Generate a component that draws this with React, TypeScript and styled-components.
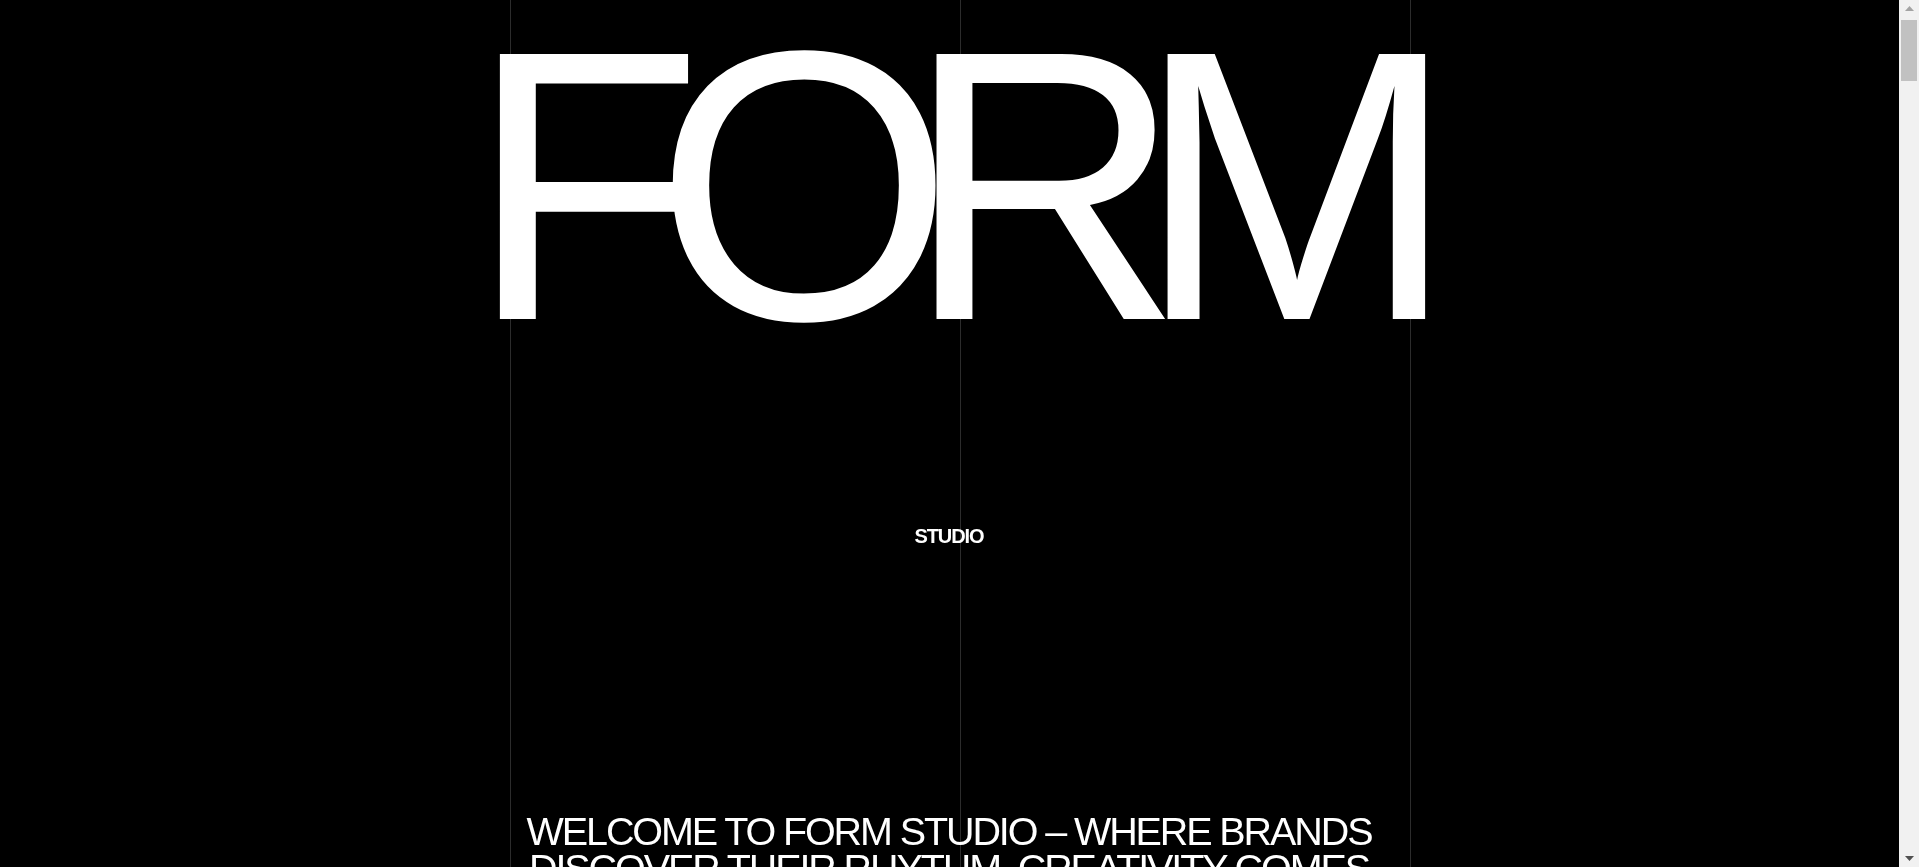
import React from "react";
import styled, { createGlobalStyle } from "styled-components";

const GlobalStyle = createGlobalStyle`
  html, body {
    margin: 0;
    padding: 0;
    background: #000;
    color: #fff;
    font-family: "Liberation Sans", Arial, Helvetica, sans-serif;
  }
  * { box-sizing: border-box; }
`;

const Page = styled.div`
  position: relative;
  min-height: 100vh;
  background: #000;
  padding-right: 21px;
`;

const GridOverlay = styled.div`
  position: fixed;
  top: 0;
  bottom: 0;
  left: calc(50vw - 449.5px);
  width: 901px;
  display: flex;
  justify-content: space-between;
  pointer-events: none;
  z-index: 0;
`;

const GridLine = styled.div`
  width: 1px;
  height: 100%;
  background: #2c2c2c;
`;

const ScrollTrack = styled.div`
  position: fixed;
  top: 0;
  right: 0;
  bottom: 0;
  width: 20px;
  background: #f1f1f1;
  display: flex;
  flex-direction: column;
  align-items: center;
  z-index: 5;
`;

const ArrowButton = styled.div`
  height: 17px;
  width: 100%;
  display: flex;
  align-items: center;
  justify-content: center;
`;

const Thumb = styled.div`
  margin-top: 3px;
  width: 16px;
  height: 61px;
  background: #c1c1c1;
`;

const TrackFill = styled.div`
  flex: 1;
`;

const Content = styled.main`
  position: relative;
  z-index: 1;
  display: flex;
  flex-direction: column;
`;

const Hero = styled.section`
  display: flex;
  flex-direction: column;
  align-items: center;
  padding-top: 13px;
`;

const Title = styled.h1`
  margin: 0 22px 0 0;
  font-family: "Liberation Sans", Arial, Helvetica, sans-serif;
  font-weight: 400;
  font-size: 385px;
  line-height: 0.9;
  letter-spacing: -49px;
  color: #fff;
  white-space: nowrap;
`;

const Kern = styled.span`
  margin-left: 2px;
`;

const Label = styled.div`
  margin-top: 166px;
  font-family: "Liberation Sans", Arial, Helvetica, sans-serif;
  font-weight: 700;
  font-size: 20px;
  line-height: 1;
  letter-spacing: -1.1px;
  color: #fff;
`;

const Intro = styled.section`
  display: flex;
  justify-content: center;
  margin-top: 267px;
  padding: 0 20px;
`;

const IntroText = styled.p`
  margin: 0;
  max-width: 900px;
  text-align: center;
  font-family: "Liberation Sans", Arial, Helvetica, sans-serif;
  font-weight: 400;
  font-size: 39.5px;
  line-height: 0.95;
  letter-spacing: -2.1px;
  text-transform: uppercase;
`;

const Work = styled.section`
  display: flex;
  flex-direction: column;
  align-items: center;
  gap: 120px;
  padding: 240px 0;
`;

const Project = styled.article`
  width: 900px;
  min-height: 1560px;
  display: flex;
  flex-direction: column;
  gap: 24px;
`;

const ProjectMedia = styled.div`
  flex: 1;
  background: #0b0b0b;
`;

const ProjectMeta = styled.div`
  display: flex;
  justify-content: space-between;
  font-size: 16px;
  letter-spacing: -0.3px;
  text-transform: uppercase;
`;

const Footer = styled.footer`
  min-height: 100vh;
  display: flex;
  align-items: flex-end;
  justify-content: center;
  padding-bottom: 40px;
  font-size: 14px;
  text-transform: uppercase;
`;

const projects = [
  ["Aurora", "Brand identity"],
  ["Northline", "Motion"],
  ["Sable", "Packaging"],
  ["Meridian", "Campaign"],
  ["Oslo Works", "Web"],
  ["Pulse", "Brand identity"],
  ["Halden", "Editorial"],
  ["Vega", "Motion"],
  ["Kiln", "Packaging"],
  ["Tide", "Campaign"],
];

function Arrow({ up, color }: { up?: boolean; color: string }) {
  return (
    <svg width="9" height="5" viewBox="0 0 9 5">
      {up ? (
        <path d="M0 5 L4.5 0 L9 5 Z" fill={color} />
      ) : (
        <path d="M0 0 L9 0 L4.5 5 Z" fill={color} />
      )}
    </svg>
  );
}

export default function App() {
  return (
    <Page>
      <GlobalStyle />
      <GridOverlay>
        <GridLine />
        <GridLine />
        <GridLine />
      </GridOverlay>
      <ScrollTrack aria-hidden="true">
        <ArrowButton>
          <Arrow up color="#a3a3a3" />
        </ArrowButton>
        <Thumb />
        <TrackFill />
        <ArrowButton>
          <Arrow color="#505050" />
        </ArrowButton>
      </ScrollTrack>
      <Content>
        <Hero>
          <Title>
            FOR<Kern>M</Kern>
          </Title>
          <Label>STUDIO</Label>
        </Hero>
        <Intro>
          <IntroText>
            Welcome to Form Studio – where brands discover their rhythm.
            Creativity comes alive through motion, shape and story.
          </IntroText>
        </Intro>
        <Work>
          {projects.map(([name, kind]) => (
            <Project key={name}>
              <ProjectMedia />
              <ProjectMeta>
                <span>{name}</span>
                <span>{kind}</span>
              </ProjectMeta>
            </Project>
          ))}
        </Work>
        <Footer>© Form Studio</Footer>
      </Content>
    </Page>
  );
}
